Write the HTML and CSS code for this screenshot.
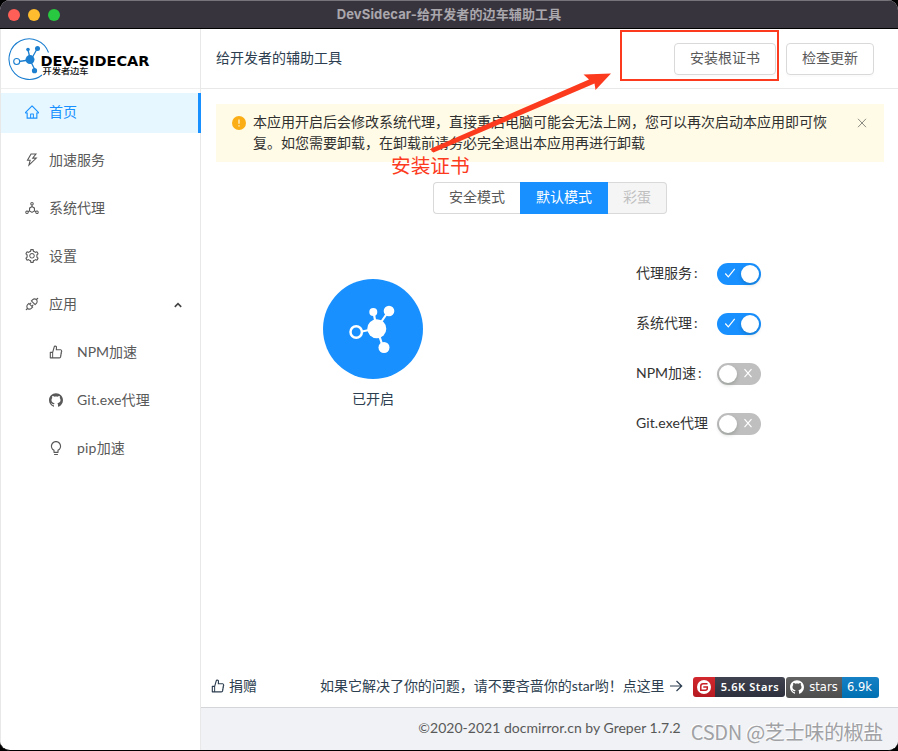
FILE: index.html
```html
<!DOCTYPE html>
<html lang="zh-CN">
<head>
<meta charset="utf-8">
<title>DevSidecar</title>
<link rel="stylesheet" href="styles.css">
</head>
<body>
<svg class="defs" width="0" height="0">
  <symbol id="home" viewBox="64 64 896 896"><path d="M946.5 505L560.1 118.8l-25.9-25.9a31.5 31.5 0 0 0-44.4 0L77.5 505a63.9 63.9 0 0 0-18.8 46c.4 35.2 29.7 63.3 64.9 63.3h42.5V940h691.8V614.3h43.4c17.1 0 33.2-6.7 45.3-18.8a63.6 63.6 0 0 0 18.7-45.3c0-17-6.7-33.1-18.8-45.2zM568 868H456V664h112v204zm217.9-325.7V868H632V640c0-22.1-17.9-40-40-40H432c-22.1 0-40 17.9-40 40v228H238.1V542.3h-96l370-369.7 23.1 23.1L882 542.3h-96.1z"/></symbol>
  <symbol id="bolt" viewBox="64 64 896 896"><path d="M848 359.3H627.7L825.8 109c4.1-5.3.4-13-6.3-13H436c-2.8 0-5.5 1.5-6.9 4L170 547.5c-3.1 5.3.7 12 6.9 12h174.4l-89.4 357.6c-1.9 7.8 7.5 13.3 13.3 7.7L853.5 373c5.2-4.9 1.7-13.7-5.5-13.7zM378.2 732.5l60.3-241H281.1l189.6-327.4h224.6L487 427.4h211L378.2 732.5z"/></symbol>
  <symbol id="unit" viewBox="64 64 896 896"><path d="M888.3 693.2c-42.5-24.6-94.3-18-129.2 12.8l-53-30.7V523.6c0-15.7-8.4-30.3-22-38.1l-136-78.3v-67.1c44.2-15 76-56.8 76-106.1 0-61.9-50.1-112-112-112s-112 50.1-112 112c0 49.3 31.8 91.1 76 106.1v67.1l-136 78.3c-13.6 7.8-22 22.4-22 38.1v151.6l-53 30.7c-34.9-30.8-86.8-37.4-129.2-12.8-53.5 31-71.7 99.4-41 152.9 30.8 53.5 98.9 71.9 152.2 41 42.5-24.6 62.7-73 53.6-118.8l48.7-28.3 140.6 81c6.8 3.9 14.4 5.9 22 5.9s15.2-2 22-5.9L674.5 740l48.7 28.3c-9.1 45.7 11.2 94.2 53.6 118.8 53.3 30.9 121.5 12.6 152.2-41 30.8-53.6 12.6-122-40.7-152.9zm-673 138.4a47.6 47.6 0 0 1-65.2-17.6c-13.2-22.9-5.4-52.3 17.5-65.5a47.6 47.6 0 0 1 65.2 17.6c13.2 22.9 5.4 52.3-17.5 65.5zM464 234a48.01 48.01 0 0 1 96 0 48.01 48.01 0 0 1-96 0zm170 446.2l-122 70.3-122-70.3V539.8l122-70.3 122 70.3v140.4zm239.9 133.9c-13.2 22.9-42.4 30.8-65.2 17.6-22.8-13.2-30.7-42.6-17.5-65.5s42.4-30.8 65.2-17.6c22.9 13.2 30.7 42.5 17.5 65.5z"/></symbol>
  <symbol id="setting" viewBox="64 64 896 896"><path d="M924.8 625.7l-65.5-56c3.1-19 4.7-38.4 4.7-57.8s-1.6-38.8-4.7-57.8l65.5-56a32.03 32.03 0 0 0 9.3-35.2l-.9-2.6a443.74 443.74 0 0 0-79.7-137.9l-1.8-2.1a32.12 32.12 0 0 0-35.1-9.5l-81.3 28.9c-30-24.6-63.5-44-99.7-57.6l-15.7-85a32.05 32.05 0 0 0-25.8-25.7l-2.7-.5c-52.1-9.4-106.9-9.4-159 0l-2.7.5a32.05 32.05 0 0 0-25.8 25.7l-15.8 85.4a351.86 351.86 0 0 0-99 57.4l-81.9-29.1a32 32 0 0 0-35.1 9.5l-1.8 2.1a446.02 446.02 0 0 0-79.7 137.9l-.9 2.6c-4.5 12.5-.8 26.5 9.3 35.2l66.3 56.6c-3.1 18.8-4.6 38-4.6 57.1 0 19.2 1.5 38.4 4.6 57.1L99 625.5a32.03 32.03 0 0 0-9.3 35.2l.9 2.6c18.1 50.4 44.9 96.9 79.7 137.9l1.8 2.1a32.12 32.12 0 0 0 35.1 9.5l81.9-29.1c29.8 24.5 63.1 43.9 99 57.4l15.8 85.4a32.05 32.05 0 0 0 25.8 25.7l2.7.5a449.4 449.4 0 0 0 159 0l2.7-.5a32.05 32.05 0 0 0 25.8-25.7l15.7-85a350 350 0 0 0 99.7-57.6l81.3 28.9a32 32 0 0 0 35.1-9.5l1.8-2.1c34.8-41.1 61.6-87.5 79.7-137.9l.9-2.6c4.5-12.3.8-26.3-9.3-35zM788.3 465.9c2.5 15.1 3.8 30.6 3.8 46.1s-1.3 31-3.8 46.1l-6.6 40.1 74.7 63.9a370.03 370.03 0 0 1-42.6 73.6L721 702.8l-31.4 25.8c-23.9 19.6-50.5 35-79.3 45.8l-38.1 14.3-17.9 97a377.5 377.5 0 0 1-85 0l-17.9-97.2-37.8-14.5c-28.5-10.8-55-26.2-78.7-45.7l-31.4-25.9-93.4 33.2c-17-22.9-31.2-47.6-42.6-73.6l75.5-64.5-6.5-40c-2.4-14.9-3.7-30.3-3.7-45.5 0-15.3 1.2-30.6 3.7-45.5l6.5-40-75.5-64.5c11.3-26.1 25.6-50.7 42.6-73.6l93.4 33.2 31.4-25.9c23.7-19.5 50.2-34.9 78.7-45.7l37.9-14.3 17.9-97.2c28.1-3.2 56.8-3.2 85 0l17.9 97 38.1 14.3c28.7 10.8 55.4 26.2 79.3 45.8l31.4 25.8 92.8-32.9c17 22.9 31.2 47.6 42.6 73.6L781.8 426l6.5 39.9zM512 326c-97.2 0-176 78.8-176 176s78.8 176 176 176 176-78.8 176-176-78.8-176-176-176zm79.2 255.2A111.6 111.6 0 0 1 512 614c-29.9 0-58-11.7-79.2-32.8A111.6 111.6 0 0 1 400 502c0-29.9 11.7-58 32.8-79.2C454 401.6 482.1 390 512 390c29.9 0 58 11.6 79.2 32.8A111.6 111.6 0 0 1 624 502c0 29.9-11.7 58-32.8 79.2z"/></symbol>
  <symbol id="api" viewBox="64 64 896 896"><path d="M917.7 148.8l-42.4-42.4c-1.6-1.6-3.6-2.3-5.7-2.3s-4.1.8-5.7 2.3l-76.1 76.1a199.27 199.27 0 0 0-112.1-34.3c-51.2 0-102.4 19.5-141.5 58.6L432.3 308.7a8.03 8.03 0 0 0 0 11.3L704 591.7c1.6 1.6 3.6 2.3 5.7 2.3 2 0 4.1-.8 5.7-2.3l101.9-101.9c68.9-69 77-175.7 24.3-253.5l76.1-76.1c3.1-3.2 3.1-8.3 0-11.4zM769.1 441.7l-59.4 59.4-186.8-186.8 59.4-59.4c24.9-24.9 58.1-38.7 93.4-38.7 35.3 0 68.4 13.7 93.4 38.7 24.9 24.9 38.7 58.1 38.7 93.4 0 35.3-13.8 68.4-38.7 93.4zm-190.2 105a8.03 8.03 0 0 0-11.3 0L501 613.3 410.7 523l66.7-66.7c3.1-3.1 3.1-8.2 0-11.3L441 408.6a8.03 8.03 0 0 0-11.3 0L363 475.3l-43-43a7.85 7.85 0 0 0-5.7-2.3c-2 0-4.1.8-5.7 2.3L206.8 534.2c-68.9 69-77 175.7-24.3 253.5l-76.1 76.1a8.03 8.03 0 0 0 0 11.3l42.4 42.4c1.6 1.6 3.6 2.3 5.7 2.3s4.1-.8 5.7-2.3l76.1-76.1c33.7 22.9 72.9 34.3 112.1 34.3 51.2 0 102.4-19.5 141.5-58.6l101.9-101.9c3.1-3.1 3.1-8.2 0-11.3l-43-43 66.7-66.7c3.1-3.1 3.1-8.2 0-11.3l-36.6-36.2zM441.7 769.1a131.32 131.32 0 0 1-93.4 38.7c-35.3 0-68.4-13.7-93.4-38.7a131.32 131.32 0 0 1-38.7-93.4c0-35.3 13.7-68.4 38.7-93.4l59.4-59.4 186.8 186.8-59.4 59.4z"/></symbol>
  <symbol id="like" viewBox="64 64 896 896"><path d="M885.9 533.7c16.8-22.2 26.1-49.4 26.1-77.7 0-44.9-25.1-87.4-65.5-111.1a67.67 67.67 0 0 0-34.3-9.3H572.4l6-122.9c1.4-29.7-9.1-57.9-29.5-79.4A106.62 106.62 0 0 0 471 99.9c-52 0-98 35-111.8 85.1l-85.9 311H144c-17.7 0-32 14.3-32 32v364c0 17.7 14.3 32 32 32h601.3c9.2 0 18.2-1.8 26.5-5.4 47.6-20.3 78.3-66.8 78.3-118.4 0-12.6-1.8-25-5.4-37 16.8-22.2 26.1-49.4 26.1-77.7 0-12.6-1.8-25-5.4-37 16.8-22.2 26.1-49.4 26.1-77.7-.2-12.6-2-25.1-5.6-37.1zM184 852V568h81v284h-81zm636.4-353l-21.9 19 13.9 25.4a56.2 56.2 0 0 1 6.9 27.3c0 16.5-7.2 32.2-19.6 43l-21.9 19 13.9 25.4a56.2 56.2 0 0 1 6.9 27.3c0 16.5-7.2 32.2-19.6 43l-21.9 19 13.9 25.4a56.2 56.2 0 0 1 6.9 27.3c0 22.4-13.2 42.6-33.6 51.8H329V564.8l99.5-360.5a44.1 44.1 0 0 1 42.2-32.3c7.6 0 15.1 2.2 21.1 6.7 9.9 7.4 15.2 18.6 14.6 30.5l-9.6 198.4h314.4C829 418.5 840 436.9 840 456c0 16.5-7.2 32.1-19.6 43z"/></symbol>
  <symbol id="github" viewBox="64 64 896 896"><path d="M511.6 76.3C264.3 76.2 64 276.4 64 523.5 64 718.9 189.3 885 363.8 946c23.5 5.9 19.9-10.8 19.9-22.2v-77.5c-135.7 15.9-141.2-73.9-150.3-88.9C215 726 171.5 718 184.5 703c30.9-15.9 62.4 4 98.9 57.9 26.4 39.1 77.9 32.5 104 26 5.7-23.5 17.9-44.5 34.7-60.8-140.6-25.2-199.2-111-199.2-213 0-49.5 16.3-95 48.3-131.7-20.4-60.5 1.9-112.3 4.9-120 58.1-5.2 118.5 41.6 123.2 45.3 33-8.9 70.7-13.6 112.9-13.6 42.4 0 80.2 4.9 113.5 13.9 11.3-8.6 67.3-48.8 121.3-43.9 2.9 7.7 24.7 58.3 5.5 118 32.4 36.8 48.9 82.7 48.9 132.3 0 102.2-59 188.1-200 212.9a127.5 127.5 0 0 1 38.1 91v112.5c.8 9 0 17.9 15 17.9 177.1-59.7 304.6-227 304.6-424.1 0-247.2-200.4-447.3-447.5-447.3z"/></symbol>
  <symbol id="bulb" viewBox="64 64 896 896"><path d="M632 888H392c-4.4 0-8 3.6-8 8v32c0 17.7 14.3 32 32 32h192c17.7 0 32-14.3 32-32v-32c0-4.4-3.6-8-8-8zM512 64c-181.1 0-328 146.9-328 328 0 121.4 66 227.4 164 284.1V792c0 17.7 14.3 32 32 32h264c17.7 0 32-14.3 32-32V676.1c98-56.7 164-162.7 164-284.1 0-181.1-146.9-328-328-328zm127.9 549.8L604 634.6V752H420V634.6l-35.9-20.8C305.4 568.3 256 484.5 256 392c0-141.4 114.6-256 256-256s256 114.6 256 256c0 92.5-49.4 176.3-128.1 221.8z"/></symbol>
</svg>
<div class="window">
  <header class="titlebar">
    <div class="lights"><i class="red"></i><i class="yellow"></i><i class="green"></i></div>
    <div class="title">DevSidecar-给开发者的边车辅助工具</div>
  </header>
  <div class="body">
    <aside class="sidebar">
      <div class="brand">
        <svg width="150" height="48" viewBox="0 0 150 48">
          <g fill="none" stroke="#1c7fd0">
            <path d="M40.500 18.500A20.300 20.300 0 1 0 34 41" stroke-width="1.100"/>
            <path d="M11 27.500L21 26M20 16l2 8M29 15l-5 9M23 28l4 8" stroke-width="1.300"/>
            <circle cx="8.700" cy="27.500" r="3" stroke-width="1.100"/>
          </g>
          <g fill="#1c7fd0"><circle cx="22" cy="25.600" r="4.500"/><circle cx="20" cy="15.500" r="1.800"/><circle cx="29.500" cy="14.600" r="2.500"/><circle cx="26.500" cy="36.700" r="2.600"/></g>
          <text class="brand-en" x="32.500" y="31.800" textLength="109" lengthAdjust="spacingAndGlyphs">DEV-SIDECAR</text>
          <text class="brand-cn" x="34.500" y="40" textLength="46" lengthAdjust="spacingAndGlyphs">开发者边车</text>
        </svg>
      </div>
      <nav class="menu">
        <a class="item active"><svg class="icon"><use href="#home"/></svg>首页</a>
        <a class="item"><svg class="icon"><use href="#bolt"/></svg>加速服务</a>
        <a class="item"><svg class="icon"><use href="#unit"/></svg>系统代理</a>
        <a class="item"><svg class="icon"><use href="#setting"/></svg>设置</a>
        <a class="item"><svg class="icon"><use href="#api"/></svg>应用<svg class="caret" width="8" height="6" viewBox="0 0 8 6"><path d="M.8 4.900L4 1.700l3.200 3.200"/></svg></a>
        <a class="item sub"><svg class="icon"><use href="#like"/></svg>NPM加速</a>
        <a class="item sub git"><svg class="icon"><use href="#github"/></svg>Git.exe代理</a>
        <a class="item sub git"><svg class="icon"><use href="#bulb"/></svg>pip加速</a>
      </nav>
    </aside>
    <main class="main">
      <div class="topbar">
        <span class="heading">给开发者的辅助工具</span>
        <span class="btn">安装根证书</span>
        <span class="btn">检查更新</span>
      </div>
      <div class="content">
        <div class="alert">
          <svg class="warn" width="14" height="14" viewBox="0 0 14 14"><circle cx="7" cy="7" r="7" fill="#faad14"/><path d="M7 3.500v4.300M7 9.300v1.300" stroke="#fffbe6" stroke-width="1.200"/></svg>
          <p>本应用开启后会修改系统代理，直接重启电脑可能会无法上网，您可以再次启动本应用即可恢复。如您需要卸载，在卸载前请务必完全退出本应用再进行卸载</p>
          <svg class="close" width="10" height="10" viewBox="0 0 10 10"><path d="M1 .8l8 8.400M9 .8L1 9.200"/></svg>
        </div>
        <div class="modes"><span class="mode">安全模式</span><span class="mode on">默认模式</span><span class="mode off">彩蛋</span></div>
        <div class="panel">
          <div class="status">
            <svg width="100" height="100" viewBox="0 0 100 100">
              <circle cx="50" cy="50" r="50" fill="#1890ff"/>
              <path d="M39 52.500l14-3M50.500 33l3 16M65 33L54 49M60 68l-6-18" fill="none" stroke="#fff" stroke-width="2.200"/>
              <circle cx="33.200" cy="53" r="5.700" fill="#1890ff" stroke="#fff" stroke-width="2.500"/>
              <g fill="#fff"><circle cx="53.800" cy="49.800" r="9.500"/><circle cx="50.300" cy="33" r="4"/><circle cx="66" cy="32" r="5.300"/><circle cx="61" cy="68.500" r="5.500"/></g>
            </svg>
            <span>已开启</span>
          </div>
          <div class="switches">
            <div class="row"><label class="colon">代理服务</label><span class="switch on"><svg viewBox="0 0 12 12"><path d="M1.300 5.500l3 3.300L10.700 .8"/></svg></span></div>
            <div class="row"><label class="colon">系统代理</label><span class="switch on"><svg viewBox="0 0 12 12"><path d="M1.300 5.500l3 3.300L10.700 .8"/></svg></span></div>
            <div class="row"><label class="colon">NPM加速</label><span class="switch"><svg viewBox="0 0 12 12"><path d="M2.500 1.200l7 8M9.500 1.200l-7 8"/></svg></span></div>
            <div class="row"><label class="git-label">Git.exe代理</label><span class="switch"><svg viewBox="0 0 12 12"><path d="M2.500 1.200l7 8M9.500 1.200l-7 8"/></svg></span></div>
          </div>
        </div>
      </div>
      <div class="support">
        <span class="donate"><svg class="icon"><use href="#like"/></svg>捐赠</span>
        <span class="ask">如果它解决了你的问题，请不要吝啬你的star哟！点这里</span>
        <svg class="arrow-right" width="14" height="12" viewBox="0 0 14 12"><path d="M1 6h11.500M7.500 1l5.200 5-5.200 5"/></svg>
        <span class="badge gitee"><i><svg width="14" height="14" viewBox="0 0 14 14"><circle cx="7" cy="7" r="7" fill="#fff"/><path d="M10.500 3.700H6Q3.800 3.700 3.800 6v4.300h4.500q2-.1 2-2V7H6.300" fill="none" stroke="#c71d23" stroke-width="1.500"/></svg></i><em>5.6K Stars</em></span>
        <span class="badge gh"><i><svg class="icon"><use href="#github"/></svg>stars</i><em>6.9k</em></span>
      </div>
      <footer class="footer">©2020-2021 docmirror.cn by Greper 1.7.2</footer>
    </main>
  </div>
  <svg class="mark" width="898" height="200" viewBox="0 0 898 200"><rect x="621" y="31" width="157" height="49" fill="none" stroke="#fc3b1e" stroke-width="2"/><path d="M431 148.500L589 79.500 583.500 74.500 611 73.500 595.500 90 594.500 83.500 433.500 152.500Q430.500 151.500 431 148.500Z" fill="#fc3b1e"/></svg>
  <span class="note">安装证书</span>
  <span class="watermark">CSDN @芝士味的椒盐</span>
</div>
</body>
</html>
```
FILE: styles.css
```css
* { box-sizing: border-box; }
body {
  margin: 0;
  background: #000;
  font: 14px/21px Lato, "Noto Sans CJK SC", sans-serif;
  color: #2c3e50;
}
.defs { position: absolute; }
.window {
  position: relative;
  width: 898px;
  height: 751px;
  display: flex;
  flex-direction: column;
  overflow: hidden;
  border-radius: 10px;
  background: #fff;
  border-bottom: 1px solid #000;
}
.titlebar {
  display: grid;
  grid-template-columns: 100px 1fr 100px;
  align-items: center;
  height: 29px;
  background: #38343d;
  border-top: 1px solid #77747b;
  border-bottom: 1px solid #000;
}
.lights { display: flex; gap: 8px; padding-left: 8px; }
.lights i { width: 12px; height: 12px; border-radius: 50%; }
.red { background: #ff5f57; }
.yellow { background: #febc2e; }
.green { background: #28c840; }
.title {
  text-align: center;
  color: #aaa7ad;
  font: bold 13px/20px Inter, "Noto Sans CJK SC", sans-serif;
  letter-spacing: .12px;
  padding-bottom: 2px;
}
.body { flex: 1; display: flex; min-height: 0; }
.sidebar { width: 201px; border-right: 1px solid #e8e8e8; border-left: 1px solid #e8e8e8; }
.brand { height: 60px; border-bottom: 1px solid #eee; padding: 5px 0 0 7px; }
.brand svg { display: block; }
.brand-en { font: bold 13.700px "DejaVu Sans", sans-serif; fill: #000; }
.brand-cn { font: 500 7.500px "Noto Sans CJK SC", sans-serif; fill: #111; }
.menu { display: flex; flex-direction: column; gap: 8px; padding-top: 4px; }
.item {
  display: flex;
  align-items: center;
  height: 40px;
  padding: 0 18px 4px 24px;
  color: #595959;
}
.icon { width: 14px; height: 14px; fill: currentColor; flex: none; }
.item .icon { margin: 2px 10px 0 0; }
.item.active { background: #e6f7ff; color: #1890ff; border-right: 3px solid #1890ff; margin-right: -1px; }
.item.sub { padding-left: 48px; }
.item.sub .icon { margin-right: 14px; }
.git { letter-spacing: .2px; }
.caret { margin: 4px 0 0 auto; fill: none; stroke: #444; stroke-width: 1.600; }
.main { flex: 1; display: flex; flex-direction: column; min-width: 0; }
.topbar {
  display: flex;
  align-items: center;
  gap: 10px;
  height: 60px;
  border-bottom: 1px solid #e8e8e8;
  padding: 0 24px 0 15px;
}
.heading { margin-right: auto; padding-bottom: 2px; }
.btn {
  height: 32px;
  padding: 4px 15px;
  border: 1px solid #d9d9d9;
  border-radius: 4px;
  color: #595959;
  box-shadow: 0 2px 0 rgba(0, 0, 0, .015);
  line-height: 20px;
}
.content { flex: 1; padding: 15px 14px 0 15px; }
.alert { display: flex; height: 58px; background: #fffbe6; padding: 7px 17px 0 16px; color: #303030; }
.alert p { width: 575px; margin: 0 auto 0 7px; }
.warn { margin-top: 5px; }
.close { margin-top: 7px; fill: none; stroke: #8b8a82; }
.modes { display: flex; justify-content: center; margin-top: 20px; }
.mode { height: 32px; line-height: 28px; padding: 0 15px; border: 1px solid #d9d9d9; color: #595959; }
.mode:first-child { border-radius: 4px 0 0 4px; border-right: 0; }
.mode.on { background: #1890ff; border-color: #1890ff; color: #fff; }
.mode.off { background: #f5f5f5; color: #bfbfbf; border-left: 0; border-radius: 0 4px 4px 0; }
.panel { display: grid; grid-template-columns: 314px 1fr; padding-top: 35px; }
.status { display: flex; flex-direction: column; align-items: center; gap: 9px; padding-top: 30px; }
.switches { padding-left: 106px; }
.row { display: flex; align-items: center; height: 50px; color: #333; }
.row label { width: 72px; overflow: hidden; white-space: nowrap; margin: 0 9px 4px 0; }
.git-label { letter-spacing: .1px; }
.colon::after { content: ":"; margin-left: 2px; }
.switch {
  display: flex;
  align-items: center;
  justify-content: flex-end;
  flex-direction: row-reverse;
  width: 44px;
  height: 22px;
  padding: 0 1px;
  gap: 5px;
  border-radius: 11px;
  background: #bfbfbf;
}
.switch::after { content: ""; width: 18px; height: 18px; margin-left: 1px; border-radius: 50%; background: #fff; box-shadow: 0 2px 4px rgba(0, 35, 11, .2); }
.switch.on { background: #1890ff; flex-direction: row; padding-right: 2px; gap: 4px; }
.switch svg { width: 12px; height: 12px; fill: none; stroke: #fff; stroke-width: 1.200; }
.support { display: flex; align-items: center; height: 43px; padding: 0 19px 0 10px; border-bottom: 1px solid #d4d5d8; }
.donate { display: flex; align-items: center; gap: 4px; padding-bottom: 2px; }
.donate .icon { margin-top: 2px; }
.ask { margin-left: 63px; white-space: nowrap; padding-bottom: 2px; letter-spacing: -.02px; }
.arrow-right { fill: none; stroke: #2c3e50; stroke-width: 1.200; margin: 0 10px 0 auto; }
.badge {
  display: flex;
  height: 20px;
  margin-top: 2px;
  border-radius: 3px;
  overflow: hidden;
  color: #fff;
  font: 11.500px/20px "DejaVu Sans", sans-serif;
}
.badge i, .badge em { font-style: normal; display: flex; align-items: center; justify-content: center; }
.gitee { width: 92px; margin: 1px 1px 0 0; }
.gitee i { width: 22px; background: linear-gradient(#d2282e, #b51a20); }
.gitee em { flex: 1; background: linear-gradient(#40434f, #2d303c); font: 600 11px/20px "Noto Sans", sans-serif; letter-spacing: .6px; }
.gh { width: 93px; height: 21px; }
.gh i { width: 56px; gap: 5px; background: linear-gradient(#626262, #4d4d4d); }
.gh em { flex: 1; padding-right: 2px; background: linear-gradient(#1681c4, #0070b3); }
.footer {
  height: 42px;
  background: #f0f2f5;
  padding: 9px 0;
  text-align: center;
  color: #595959;
  letter-spacing: .02px;
}
.mark { position: absolute; left: 0; top: 0; }
.note { position: absolute; left: 391px; top: 153px; font-size: 19.700px; line-height: 26px; color: #fc3b1e; }
.watermark {
  position: absolute;
  right: 15px;
  top: 718px;
  font: 20px/28px "Noto Sans CJK SC", sans-serif;
  letter-spacing: -.3px;
  white-space: nowrap;
  color: #a0a1a4;
  text-shadow: -1px -1px 0 #fff;
}
```
